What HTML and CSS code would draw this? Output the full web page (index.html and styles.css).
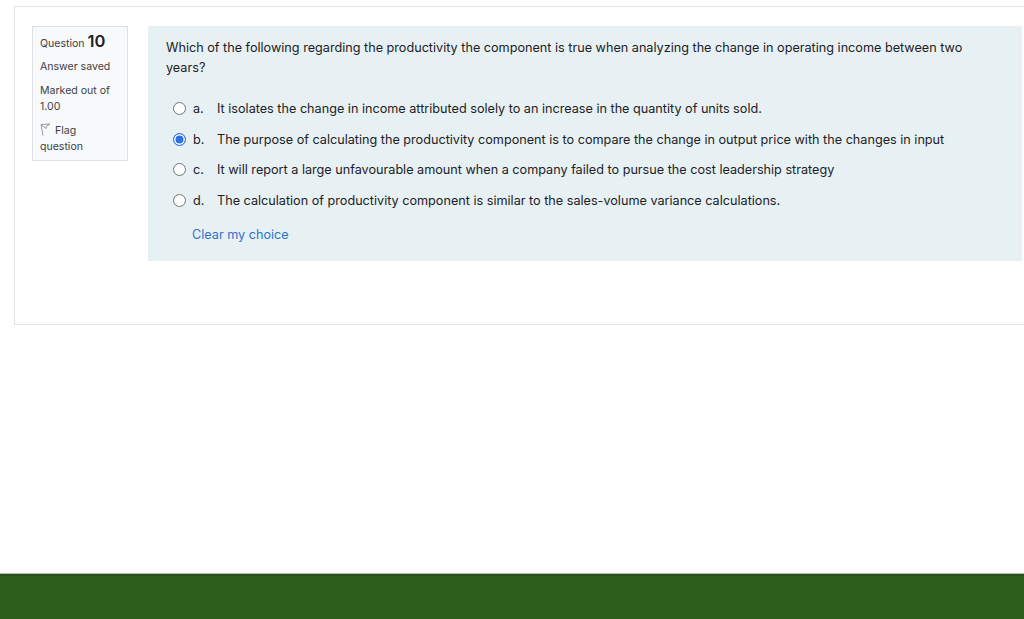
FILE: index.html
```html
<!DOCTYPE html>
<html>

<head>
    <title>Question 10</title>

    <link rel="stylesheet" href="styles.css">
</head>

<body>
    <section class="question-card">
        <div class="info-box">
            <h3 class="question-no">Question <span class="qno">10</span></h3>
            <p class="state">Answer saved</p>
            <p class="grade">Marked out of 1.00</p>
            <p class="flag">
                <svg class="flag-icon" width="11" height="13" viewBox="0 0 11 13">
                    <path d="M3 12.5 L1 1.5 L10 1 L6.5 3.2 L6 5.5 L1.5 2" fill="none" stroke="#8a9096" stroke-width="0.9"/>
                </svg>
                Flag question
            </p>
        </div>

        <div class="content-box">
            <p class="question-text">Which of the following regarding the productivity the component is true when analyzing the change in operating income between two years?</p>

            <div class="answers">
                <div class="answer">
                    <span class="radio"></span>
                    <span class="letter">a.</span>
                    <span>It isolates the change in income attributed solely to an increase in the quantity of units sold.</span>
                </div>
                <div class="answer">
                    <span class="radio checked"></span>
                    <span class="letter">b.</span>
                    <span>The purpose of calculating the productivity component is to compare the change in output price with the changes in input</span>
                </div>
                <div class="answer">
                    <span class="radio"></span>
                    <span class="letter">c.</span>
                    <span>It will report a large unfavourable amount when a company failed to pursue the cost leadership strategy</span>
                </div>
                <div class="answer">
                    <span class="radio"></span>
                    <span class="letter">d.</span>
                    <span>The calculation of productivity component is similar to the sales-volume variance calculations.</span>
                </div>
            </div>

            <a class="clear-link" href="#">Clear my choice</a>
        </div>
    </section>

    <div class="spacer"></div>

    <footer></footer>
</body>

</html>
```

FILE: styles.css
```css
html, body {
    height: 100%;
}

body {
    font-family: Inter, "Liberation Sans", sans-serif;
    margin: 0;
    padding: 6px 0 0 14px;
    box-sizing: border-box;
    background-color: #fff;
    color: #1d2125;
    display: flex;
    flex-direction: column;
    overflow: hidden;
}

.question-card {
    height: 319px;
    box-sizing: border-box;
    border: 1px solid #e3e3e4;
    border-right: none;
    padding: 19px 2px 0 17px;
    display: flex;
    align-items: flex-start;
    gap: 20px;
}

.info-box {
    width: 96px;
    height: 135px;
    box-sizing: border-box;
    flex-shrink: 0;
    background-color: #f8f9fa;
    border: 1px solid #dee2e6;
    padding: 5px 7px;
    font-size: 10.55px;
    line-height: 16px;
    color: #3d4246;
}

.question-no {
    margin: 0;
    font-size: 10.55px;
    font-weight: normal;
    line-height: 18px;
}

.qno {
    font-size: 16.5px;
    font-weight: 600;
    color: #1d2125;
}

.state {
    margin: 6px 0 0;
}

.grade {
    margin: 8px 0 0;
}

.flag {
    margin: 8px 0 0;
}

.flag-icon {
    vertical-align: -2px;
    margin-right: 1px;
}

.content-box {
    flex: 1;
    height: 235px;
    box-sizing: border-box;
    background-color: #e7f1f4;
    padding: 12px 18px 0;
    font-size: 12.65px;
}

.question-text {
    margin: 0;
    line-height: 20px;
}

.answers {
    margin-top: 20.4px;
    display: flex;
    flex-direction: column;
    gap: 10.8px;
}

.answer {
    display: flex;
    align-items: center;
    height: 20px;
    margin-left: 7px;
    white-space: nowrap;
}

.radio {
    width: 13px;
    height: 13px;
    box-sizing: border-box;
    border: 1px solid #6f7479;
    border-radius: 50%;
    background-color: #fff;
    margin-right: 7px;
    flex-shrink: 0;
}

.radio.checked {
    border: 1.5px solid #2f6fe4;
    background-color: #2f6fe4;
    box-shadow: inset 0 0 0 1.5px #fff;
}

.letter {
    width: 24px;
    flex-shrink: 0;
}

.clear-link {
    display: block;
    margin: 14.6px 0 0 26px;
    line-height: 20px;
    color: #2f73c9;
    text-decoration: none;
}

.spacer {
    flex: 1;
}

footer {
    height: 46px;
    box-sizing: border-box;
    margin-left: -14px;
    flex-shrink: 0;
    background-color: #2e5e1b;
    border-top: 1px solid #b5c2ae;
    box-shadow: inset 0 2px 0 #2a5019;
}
```
